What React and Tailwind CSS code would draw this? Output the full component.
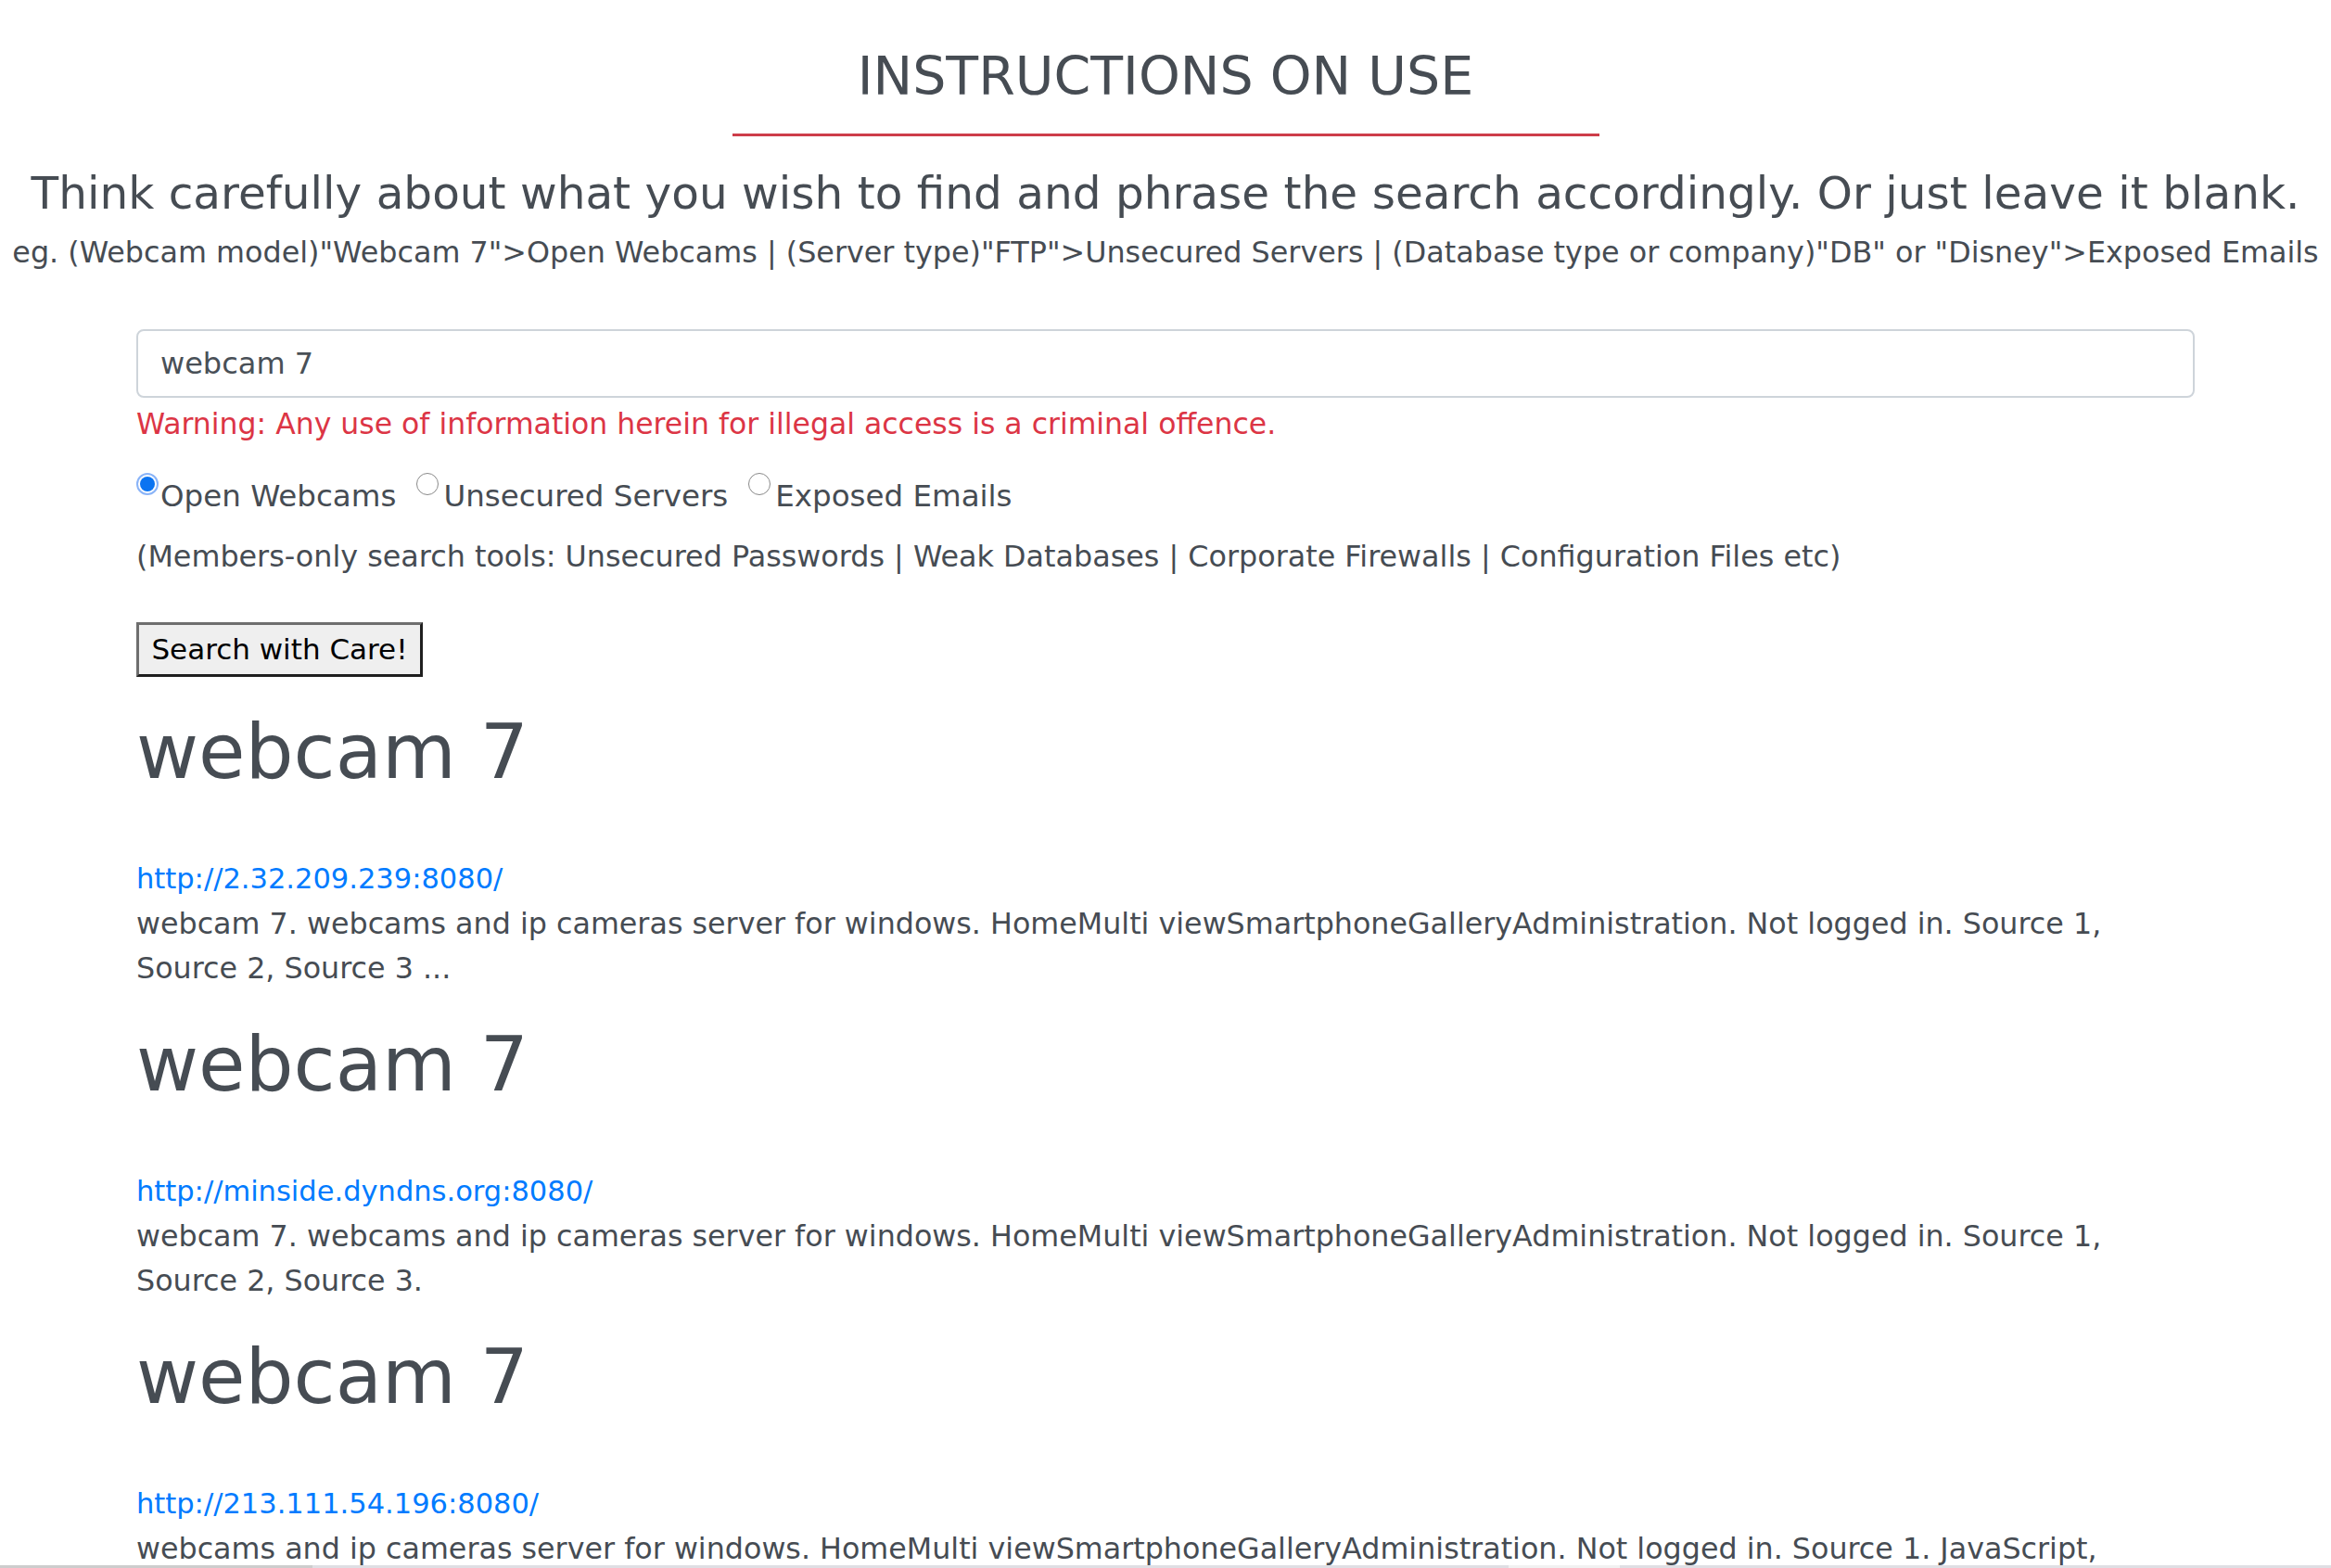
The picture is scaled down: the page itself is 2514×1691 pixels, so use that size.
import React from "react";

function Radio({ checked }) {
  if (checked) {
    return (
      <span className="w-[24px] h-[24px] shrink-0 rounded-full border-2 border-[#8ab4f8] bg-white flex items-center justify-center">
        <span className="w-[16px] h-[16px] rounded-full bg-[#0b74f1]" />
      </span>
    );
  }
  return <span className="w-[24px] h-[24px] shrink-0 rounded-full border border-[#8a8a8a] bg-white" />;
}

function Result({ url, lines }) {
  return (
    <div className="mb-[32px]">
      <h1 className="text-[82px] leading-[96px] text-[#464c53] font-normal">webcam 7</h1>
      <div className="mt-[65px] text-[30.5px] leading-[48px]">
        <a className="text-[#007bff] block">{url}</a>
      </div>
      <p className="text-[31.75px] leading-[48px] text-[#464c53]">
        {lines.map((l, i) => (
          <span key={i} className="block whitespace-nowrap">{l}</span>
        ))}
      </p>
    </div>
  );
}

export default function App() {
  return (
    <div className="relative w-[2514px] h-[1691px] overflow-hidden bg-white text-[#464c53] font-['DejaVu_Sans',sans-serif]">
      <div className="pt-[50px] flex flex-col items-center text-center">
        <h2 className="text-[57px] leading-[64px] font-normal">INSTRUCTIONS ON USE</h2>
        <div className="mt-[30px] w-[935px] h-[3px] bg-[#cd3d4a]" />
        <h4 className="mt-[32px] text-[48.5px] leading-[58px] font-normal whitespace-nowrap">
          Think carefully about what you wish to find and phrase the search accordingly. Or just leave it blank.
        </h4>
        <p className="mt-[13px] text-[31.8px] leading-[44px] whitespace-nowrap">
          {'eg. (Webcam model)"Webcam 7">Open Webcams | (Server type)"FTP">Unsecured Servers | (Database type or company)"DB" or "Disney">Exposed Emails'}
        </p>
      </div>

      <div className="w-[2220px] mx-auto">
        <div className="mt-[61px] h-[74px] border-2 border-[#ced4da] rounded-[8px] flex items-center pl-[24px] text-[32px] text-[#495057]">
          webcam 7
        </div>
        <div className="mt-[6px] text-[31.5px] leading-[44px] text-[#dc3545]">
          Warning: Any use of information herein for illegal access is a criminal offence.
        </div>
        <div className="mt-[29px] flex items-start text-[32.5px] leading-[48px]">
          <span className="mt-[2px] flex"><Radio checked /></span>
          <span className="ml-[2px] mt-[3px]">Open Webcams</span>
          <span className="ml-[22px] mt-[2px] flex"><Radio /></span>
          <span className="ml-[5px] mt-[3px]">Unsecured Servers</span>
          <span className="ml-[22px] mt-[2px] flex"><Radio /></span>
          <span className="ml-[5px] mt-[3px]">Exposed Emails</span>
        </div>
        <div className="mt-[17px] text-[31.8px] leading-[48px]">
          (Members-only search tools: Unsecured Passwords | Weak Databases | Corporate Firewalls | Configuration Files etc)
        </div>
        <button className="mt-[47px] w-[309px] h-[59px] bg-[#efefef] border-[3px] border-t-[#6e6e6e] border-l-[#6e6e6e] border-b-[#1f1f1f] border-r-[#1f1f1f] text-black text-[31px] flex items-center justify-center">
          Search with Care!
        </button>

        <div className="mt-[33px]">
          <Result
            url="http://2.32.209.239:8080/"
            lines={[
              "webcam 7. webcams and ip cameras server for windows. HomeMulti viewSmartphoneGalleryAdministration. Not logged in. Source 1,",
              "Source 2, Source 3 ...",
            ]}
          />
          <Result
            url="http://minside.dyndns.org:8080/"
            lines={[
              "webcam 7. webcams and ip cameras server for windows. HomeMulti viewSmartphoneGalleryAdministration. Not logged in. Source 1,",
              "Source 2, Source 3.",
            ]}
          />
          <Result
            url="http://213.111.54.196:8080/"
            lines={[
              "webcams and ip cameras server for windows. HomeMulti viewSmartphoneGalleryAdministration. Not logged in. Source 1. JavaScript,",
              "Java, ActiveX. Source 2, Source 3 ...",
            ]}
          />
        </div>
      </div>

      <div className="absolute left-0 bottom-0 w-full h-[3px] flex">
        <div className="w-[337px] h-full bg-[#cdcdcd]" />
        <div className="w-[1290px] h-full bg-[#dfdfe4]" />
        <div className="w-[120px] h-full bg-[#f1f1f1]" />
        <div className="flex-1 h-full bg-[#dfdfe4]" />
      </div>
    </div>
  );
}
